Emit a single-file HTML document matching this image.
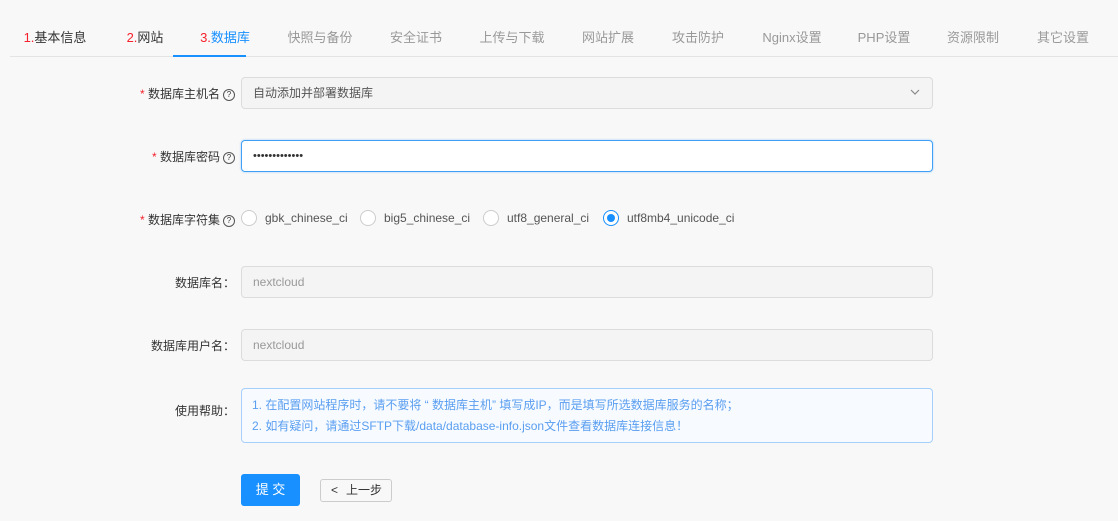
<!DOCTYPE html><html><head><meta charset="utf-8"><style>
body{margin:0;width:1118px;height:521px;background:#f8f8f8;font-family:"Liberation Sans","Noto Sans CJK SC",sans-serif;font-size:12px;color:#333;position:relative;overflow:hidden}
.a{position:absolute;white-space:nowrap}
.tab{position:absolute;top:27px;font-size:13px;color:#999;transform:translateX(-50%)}
.r{color:#f5222d}
.box{position:absolute;left:241px;height:30px;border:1px solid #dcdcdc;border-radius:4px;background:#f4f4f4;line-height:30px;padding-left:11px;box-sizing:content-box;width:679px}
.lbl{position:absolute;right:883px;font-size:12px;color:#333}
.q{display:inline-block;width:10px;height:10px;border:1px solid #555;border-radius:50%;font-size:8px;line-height:10px;text-align:center;margin-left:3px;vertical-align:1px}
.rad{position:absolute;top:210px;width:14px;height:14px;border:1px solid #ccc;border-radius:50%;background:#fff}
.rt{position:absolute;top:211px;color:#555}
</style></head><body>
<div class="tab" style="left:55px;color:#333"><span class="r">1.</span>基本信息</div>
<div class="tab" style="left:145px;color:#333"><span class="r">2.</span>网站</div>
<div class="tab" style="left:225px;color:#1890ff"><span class="r">3.</span>数据库</div>
<div class="tab" style="left:320px">快照与备份</div>
<div class="tab" style="left:416px">安全证书</div>
<div class="tab" style="left:512px">上传与下载</div>
<div class="tab" style="left:608px">网站扩展</div>
<div class="tab" style="left:698px">攻击防护</div>
<div class="tab" style="left:792px">Nginx设置</div>
<div class="tab" style="left:884px">PHP设置</div>
<div class="tab" style="left:973px">资源限制</div>
<div class="tab" style="left:1063px">其它设置</div>
<div class="a" style="left:10px;top:56px;width:1108px;height:1px;background:#e4e4e4"></div>
<div class="a" style="left:173px;top:55px;width:73px;height:2px;background:#1890ff"></div>

<div class="lbl" style="top:85px"><span class="r">* </span>数据库主机名<span class="q">?</span></div>
<div class="box" style="top:77px;color:#555">自动添加并部署数据库<svg style="position:absolute;right:12px;top:11px" width="10" height="7"><path d="M1 1L5 5L9 1" fill="none" stroke="#888" stroke-width="1.2"/></svg></div>

<div class="lbl" style="top:148px"><span class="r">* </span>数据库密码<span class="q">?</span></div>
<div class="box" style="top:140px;background:#fff;border-color:#40a0f5;box-shadow:0 0 2px #9ccffa;color:#333;font-size:11px">•••••••••••••</div>

<div class="lbl" style="top:211px"><span class="r">* </span>数据库字符集<span class="q">?</span></div>
<div class="rad" style="left:241px"></div><div class="rt" style="left:265px">gbk_chinese_ci</div>
<div class="rad" style="left:360px"></div><div class="rt" style="left:384px">big5_chinese_ci</div>
<div class="rad" style="left:483px"></div><div class="rt" style="left:507px">utf8_general_ci</div>
<div class="rad" style="left:603px;border-color:#1890ff"><div style="position:absolute;left:3px;top:3px;width:8px;height:8px;border-radius:50%;background:#1890ff"></div></div><div class="rt" style="left:627px">utf8mb4_unicode_ci</div>

<div class="lbl" style="top:274px">数据库名：</div>
<div class="box" style="top:266px;color:#999">nextcloud</div>
<div class="lbl" style="top:337px">数据库用户名：</div>
<div class="box" style="top:329px;color:#999">nextcloud</div>

<div class="lbl" style="top:402px">使用帮助：</div>
<div class="a" style="left:241px;top:388px;height:55px;border:1px solid #a6d0fb;border-radius:4px;background:#f7fbff;padding-left:10px;color:#5a9ef0;line-height:21px;padding-top:6px;box-sizing:border-box;width:692px">1. 在配置网站程序时，请不要将 “ 数据库主机” 填写成IP，而是填写所选数据库服务的名称；<br>2. 如有疑问，请通过SFTP下载/data/database-info.json文件查看数据库连接信息！</div>

<div class="a" style="left:241px;top:474px;width:59px;height:32px;background:#1890ff;border-radius:3px;color:#fff;font-size:13px;line-height:32px;text-align:center">提 交</div>
<div class="a" style="left:320px;top:479px;width:70px;height:21px;border:1px solid #ccc;border-radius:3px;background:#f8f8f8;line-height:21px;color:#333"><span style="margin-left:10px;margin-right:8px">&lt;</span>上一步</div>
</body></html>
